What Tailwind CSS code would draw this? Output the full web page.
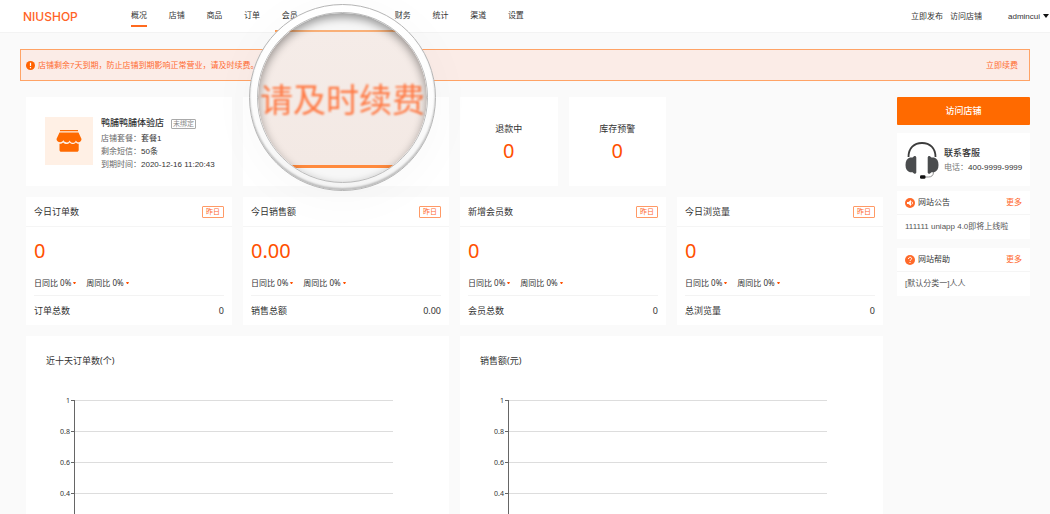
<!DOCTYPE html>
<html lang="zh-CN">
<head>
<meta charset="utf-8">
<title>NIUSHOP</title>
<script src="https://cdn.jsdelivr.net/npm/@tailwindcss/browser@4"></script>
</head>
<body class="bg-[#fafafa] font-['Liberation_Sans','Noto_Sans_CJK_SC',sans-serif] text-[8px] leading-[13px] text-[#333]">
<div class="relative h-screen overflow-hidden">

<header class="flex h-8 items-center bg-white pl-[23px] shadow-[0_1px_0_#f3f3f3]">
  <a href="#" class="w-[108px] font-['Inter',sans-serif] text-[12px] font-medium text-[#ff6326]">NIUSHOP</a>
  <nav class="flex h-8 w-[393px] justify-between">
    <a href="#" class="flex h-[27px] items-end border-b-2 border-[#ff6a1f] pb-[3px]">概况</a>
    <a href="#" class="flex h-[27px] items-end pb-[5px]">店铺</a>
    <a href="#" class="flex h-[27px] items-end pb-[5px]">商品</a>
    <a href="#" class="flex h-[27px] items-end pb-[5px]">订单</a>
    <a href="#" class="flex h-[27px] items-end pb-[5px]">会员</a>
    <a href="#" class="flex h-[27px] items-end pb-[5px]">营销</a>
    <a href="#" class="flex h-[27px] items-end pb-[5px]">应用</a>
    <a href="#" class="flex h-[27px] items-end pb-[5px]">财务</a>
    <a href="#" class="flex h-[27px] items-end pb-[5px]">统计</a>
    <a href="#" class="flex h-[27px] items-end pb-[5px]">渠道</a>
    <a href="#" class="flex h-[27px] items-end pb-[5px]">设置</a>
  </nav>
  <div class="ml-auto flex items-center pr-px">
    <a href="#" class="mr-[7px]">立即发布</a>
    <a href="#" class="mr-[26px]">访问店铺</a>
    <button class="flex items-center gap-[3px]">admincui
      <svg class="h-1 w-[6px]" viewBox="0 0 6 4" fill="#111"><path d="M0 0h6L3 4z"/></svg>
    </button>
  </div>
</header>

<div class="mx-5 mt-[17px] flex h-8 items-center border border-[#ffa366] bg-[#fbece7] pr-[11px] pl-[5px] text-[#ff6a2f]">
  <svg class="mr-[3px] h-[9px] w-[9px]" viewBox="0 0 9 9"><circle cx="4.500" cy="4.500" r="4.500" fill="#ff6200"/><path d="M4.500 1.800v3.300M4.500 6v1.200" stroke="#fff" stroke-width="1.200"/></svg>
  <span>店铺剩余7天到期，防止店铺到期影响正常营业，请及时续费。</span>
  <a href="#" class="ml-auto">立即续费</a>
</div>

<div class="mt-4 flex items-start gap-[14px] pr-5 pl-[26px]">
  <main class="grid flex-1 grid-cols-8 gap-[11px]">
    <section class="col-span-2 flex h-[89px] gap-2 bg-white pt-5 pl-[19px]">
      <div class="flex h-12 w-12 items-center justify-center bg-[#fff0e5]">
        <svg class="h-[24px] w-[26px]" viewBox="0 0 26 24" fill="#ff6a00"><path d="M4 1h18v1.300H4zM3.500 3.500h19L25.500 10c0 2-1.300 3.200-2.800 3.200-1.300 0-2.300-.8-2.800-1.800-.7 2-2.400 2.800-3.700 2.300-1.200-.3-2-1.200-2.600-2.300-.4 1.100-1.500 2-2.800 2-1.700 0-2.900-1-3.500-2.300-.5 1.300-1.600 2.100-3 2.100C2 13.200.5 12 .5 10z"/><path d="M3.500 14.700c1.500.1 2.700-.3 3.700-1.300 1.800 1.900 4.400 2.300 6.500.1 1.600 2 4.300 2 6.100-.1.800.9 1.800 1.300 2.900 1.300V21c0 1.100-.7 1.800-1.800 1.800H5.300c-1.100 0-1.800-.7-1.800-1.800z"/></svg>
      </div>
      <div>
        <div class="mb-[2px] flex items-center gap-[7px]">
          <h2 class="text-[9px] font-medium">鸭脯鸭脯体验店</h2>
          <span class="rounded-[1px] border border-[#aaa] px-px text-[7px] leading-[8px] text-[#888]">未绑定</span>
        </div>
        <p><span class="text-[#666]">店铺套餐：</span>套餐1</p>
        <p><span class="text-[#666]">剩余短信：</span>50条</p>
        <p><span class="text-[#666]">到期时间：</span>2020-12-16 11:20:43</p>
      </div>
    </section>
    <section class="bg-white"></section>
    <section class="bg-white"></section>
    <section class="flex flex-col items-center bg-white pt-[25px] font-['Noto_Sans','Noto_Sans_CJK_SC',sans-serif]">
      <h3 class="text-[9px]">退款中</h3><p class="mt-[2px] text-xl leading-7 text-[#ff5000]">0</p>
    </section>
    <section class="flex flex-col items-center bg-white pt-[25px] font-['Noto_Sans','Noto_Sans_CJK_SC',sans-serif]">
      <h3 class="text-[9px]">库存预警</h3><p class="mt-[2px] text-xl leading-7 text-[#ff5000]">0</p>
    </section>

    <section class="col-span-2 col-start-1 h-[128px] bg-white font-['Noto_Sans','Noto_Sans_CJK_SC',sans-serif]">
      <div class="flex h-[30px] items-center justify-between border-b border-[#f5f5f5] px-2 text-[9px]"><h3>今日订单数</h3><button class="rounded-[1px] border border-[#ff9a66] px-[3px] text-[7px] leading-[10px] text-[#ff6a2f]">昨日</button></div>
      <div class="px-2">
        <p class="mt-[10px] text-xl leading-7 text-[#ff5000]">0</p>
        <p class="mt-[11px] flex h-[20px] gap-[10px] border-b-1 border-[#f3f3f3]"><span class="flex h-[13px] items-center gap-[2px]">日同比 0%<svg class="h-[2px] w-[3px]" viewBox="0 0 3 2" fill="#ff5000"><path d="M0 0h3L2 2H1z"/></svg></span><span class="flex h-[13px] items-center gap-[2px]">周同比 0%<svg class="h-[2px] w-[3px]" viewBox="0 0 3 2" fill="#ff5000"><path d="M0 0h3L2 2H1z"/></svg></span></p>
        <p class="flex h-7 items-center justify-between text-[9px]"><span>订单总数</span><span>0</span></p>
      </div>
    </section>
    <section class="col-span-2 h-[128px] bg-white font-['Noto_Sans','Noto_Sans_CJK_SC',sans-serif]">
      <div class="flex h-[30px] items-center justify-between border-b border-[#f5f5f5] px-2 text-[9px]"><h3>今日销售额</h3><button class="rounded-[1px] border border-[#ff9a66] px-[3px] text-[7px] leading-[10px] text-[#ff6a2f]">昨日</button></div>
      <div class="px-2">
        <p class="mt-[10px] text-xl leading-7 text-[#ff5000]">0.00</p>
        <p class="mt-[11px] flex h-[20px] gap-[10px] border-b-1 border-[#f3f3f3]"><span class="flex h-[13px] items-center gap-[2px]">日同比 0%<svg class="h-[2px] w-[3px]" viewBox="0 0 3 2" fill="#ff5000"><path d="M0 0h3L2 2H1z"/></svg></span><span class="flex h-[13px] items-center gap-[2px]">周同比 0%<svg class="h-[2px] w-[3px]" viewBox="0 0 3 2" fill="#ff5000"><path d="M0 0h3L2 2H1z"/></svg></span></p>
        <p class="flex h-7 items-center justify-between text-[9px]"><span>销售总额</span><span>0.00</span></p>
      </div>
    </section>
    <section class="col-span-2 h-[128px] bg-white font-['Noto_Sans','Noto_Sans_CJK_SC',sans-serif]">
      <div class="flex h-[30px] items-center justify-between border-b border-[#f5f5f5] px-2 text-[9px]"><h3>新增会员数</h3><button class="rounded-[1px] border border-[#ff9a66] px-[3px] text-[7px] leading-[10px] text-[#ff6a2f]">昨日</button></div>
      <div class="px-2">
        <p class="mt-[10px] text-xl leading-7 text-[#ff5000]">0</p>
        <p class="mt-[11px] flex h-[20px] gap-[10px] border-b-1 border-[#f3f3f3]"><span class="flex h-[13px] items-center gap-[2px]">日同比 0%<svg class="h-[2px] w-[3px]" viewBox="0 0 3 2" fill="#ff5000"><path d="M0 0h3L2 2H1z"/></svg></span><span class="flex h-[13px] items-center gap-[2px]">周同比 0%<svg class="h-[2px] w-[3px]" viewBox="0 0 3 2" fill="#ff5000"><path d="M0 0h3L2 2H1z"/></svg></span></p>
        <p class="flex h-7 items-center justify-between text-[9px]"><span>会员总数</span><span>0</span></p>
      </div>
    </section>
    <section class="col-span-2 h-[128px] bg-white font-['Noto_Sans','Noto_Sans_CJK_SC',sans-serif]">
      <div class="flex h-[30px] items-center justify-between border-b border-[#f5f5f5] px-2 text-[9px]"><h3>今日浏览量</h3><button class="rounded-[1px] border border-[#ff9a66] px-[3px] text-[7px] leading-[10px] text-[#ff6a2f]">昨日</button></div>
      <div class="px-2">
        <p class="mt-[10px] text-xl leading-7 text-[#ff5000]">0</p>
        <p class="mt-[11px] flex h-[20px] gap-[10px] border-b-1 border-[#f3f3f3]"><span class="flex h-[13px] items-center gap-[2px]">日同比 0%<svg class="h-[2px] w-[3px]" viewBox="0 0 3 2" fill="#ff5000"><path d="M0 0h3L2 2H1z"/></svg></span><span class="flex h-[13px] items-center gap-[2px]">周同比 0%<svg class="h-[2px] w-[3px]" viewBox="0 0 3 2" fill="#ff5000"><path d="M0 0h3L2 2H1z"/></svg></span></p>
        <p class="flex h-7 items-center justify-between text-[9px]"><span>总浏览量</span><span>0</span></p>
      </div>
    </section>

    <section class="col-span-4 bg-white pt-5 pb-5 font-['Noto_Sans','Noto_Sans_CJK_SC',sans-serif]">
      <h3 class="pl-5 text-[9px] leading-[10px]">近十天订单数(个)</h3>
      <div class="mt-[19px] flex pr-[56px]">
        <div class="w-11 text-right text-[7px] leading-[31px]"><p>1</p><p>0.8</p><p>0.6</p><p>0.4</p></div>
        <div class="ml-px w-[3px] pt-[15px]"><div class="h-[31px] border-t border-[#666]"></div><div class="h-[31px] border-t border-[#666]"></div><div class="h-[31px] border-t border-[#666]"></div><div class="h-[31px] border-t border-[#666]"></div></div>
        <div class="flex-1 pt-[15px]"><div class="border-l border-[#666]"><div class="h-[31px] border-t border-[#ddd]"></div><div class="h-[31px] border-t border-[#ddd]"></div><div class="h-[31px] border-t border-[#ddd]"></div><div class="h-[31px] border-t border-[#ddd]"></div></div></div>
      </div>
    </section>
    <section class="col-span-4 bg-white pt-5 pb-5 font-['Noto_Sans','Noto_Sans_CJK_SC',sans-serif]">
      <h3 class="pl-5 text-[9px] leading-[10px]">销售额(元)</h3>
      <div class="mt-[19px] flex pr-[56px]">
        <div class="w-11 text-right text-[7px] leading-[31px]"><p>1</p><p>0.8</p><p>0.6</p><p>0.4</p></div>
        <div class="ml-px w-[3px] pt-[15px]"><div class="h-[31px] border-t border-[#666]"></div><div class="h-[31px] border-t border-[#666]"></div><div class="h-[31px] border-t border-[#666]"></div><div class="h-[31px] border-t border-[#666]"></div></div>
        <div class="flex-1 pt-[15px]"><div class="border-l border-[#666]"><div class="h-[31px] border-t border-[#ddd]"></div><div class="h-[31px] border-t border-[#ddd]"></div><div class="h-[31px] border-t border-[#ddd]"></div><div class="h-[31px] border-t border-[#ddd]"></div></div></div>
      </div>
    </section>
  </main>

  <aside class="w-[133px]">
    <button class="block h-7 w-full rounded-[1px] bg-[#ff6a00] text-[9px] font-medium text-white">访问店铺</button>
    <section class="mt-2 flex h-[53px] items-center gap-[5px] bg-white pl-2">
      <svg class="h-[38px] w-[34px]" viewBox="0 0 34 38" fill="none"><path d="M3.500 16C3.500 7 9 2 17 2s13.500 5 13.500 14" stroke="#3c3c3c" stroke-width="1.800"/><path d="M5 16.500h2.500L9 15.200c1-.6 2.300 0 2.300 1.300v14.700c0 1.300-1.300 1.900-2.300 1.300l-1.500-1.300H5C2 30.500.5 28 .5 24S2 17.200 5 16.500zM29 16.500h-2.500L25 15.200c-1-.6-2.300 0-2.300 1.300v14.700c0 1.300 1.300 1.900 2.300 1.300l1.500-1.300H29c3-.7 4.500-3.200 4.500-7.200S32 17.200 29 16.500z" fill="#4a4c4e"/><path d="M28.500 31c0 3.500-2 5-5 5H20" stroke="#777" stroke-width=".8"/><rect x="15" y="34.300" width="5.500" height="3.400" rx="1.300" fill="#111"/></svg>
      <div><h3 class="text-[9px] leading-[15px] font-medium">联系客服</h3><p><span class="text-[#777]">电话：</span>400-9999-9999</p></div>
    </section>
    <section class="mt-[5px] h-12 bg-white">
      <div class="flex h-6 items-center border-b border-[#f5f5f5] px-2">
        <svg class="mr-[3px] h-[10px] w-[10px]" viewBox="0 0 10 10"><circle cx="5" cy="5" r="5" fill="#ff6a2a"/><path d="M2 4h1.500l2.500-2v6L3.500 6H2z" fill="#fff"/><path d="M6.700 3.500c1 .8 1 2.200 0 3" stroke="#fff" fill="none"/></svg>
        <h3>网站公告</h3><a href="#" class="ml-auto text-[#ff6a2f]">更多</a>
      </div>
      <p class="px-2 leading-[24px]"><a href="#" class="text-[#555]">111111 uniapp 4.0即将上线啦</a></p>
    </section>
    <section class="mt-[9px] h-12 bg-white">
      <div class="flex h-6 items-center border-b border-[#f5f5f5] px-2">
        <svg class="mr-[3px] h-[10px] w-[10px]" viewBox="0 0 10 10"><circle cx="5" cy="5" r="5" fill="#ff6a2a"/><path d="M3.500 4c0-2.300 3.100-2.200 3.100-.3C6.600 4.800 5 4.800 5 6M5 7v1" stroke="#fff" fill="none"/></svg>
        <h3>网站帮助</h3><a href="#" class="ml-auto text-[#ff6a2f]">更多</a>
      </div>
      <p class="px-2 leading-[24px]"><a href="#" class="text-[#555]">[默认分类一]人人</a></p>
    </section>
  </aside>
</div>

<!-- Magnifier floating over the renewal notice -->
<div class="absolute top-1 left-[249px] h-[187px] w-[187px] rounded-full shadow-[0_6px_50px_rgba(0,0,0,0.03)]">
  <div class="absolute top-[26px] left-[26px] h-[2px] w-10 bg-[#ff9a50]"></div>
  <div class="relative h-full rounded-full border border-[#b5b5b5] bg-linear-to-b from-white via-[#fdfdfd] to-[#f4f4f4] p-[7px] shadow-[inset_0_-2px_2px_#bbb]">
    <div class="relative flex h-full flex-col overflow-hidden rounded-full border border-[#bbb] bg-[#f7f7f7]">
      <div class="mt-[17px] flex h-[138px] items-center justify-center border-t-2 border-b-3 border-t-[#f9b078] border-b-[#ff8a3d] bg-linear-to-b from-[#f5ece8] to-[#f3e9e4] pt-1 text-[33px] whitespace-nowrap text-[#ff7a45]"><span class="blur-[1px]">请及时续费</span></div>
      <div class="absolute inset-0 rounded-full shadow-[inset_0_4px_10px_rgba(0,0,0,0.4)]"></div>
    </div>
  </div>
</div>
</div>
</body>
</html>
